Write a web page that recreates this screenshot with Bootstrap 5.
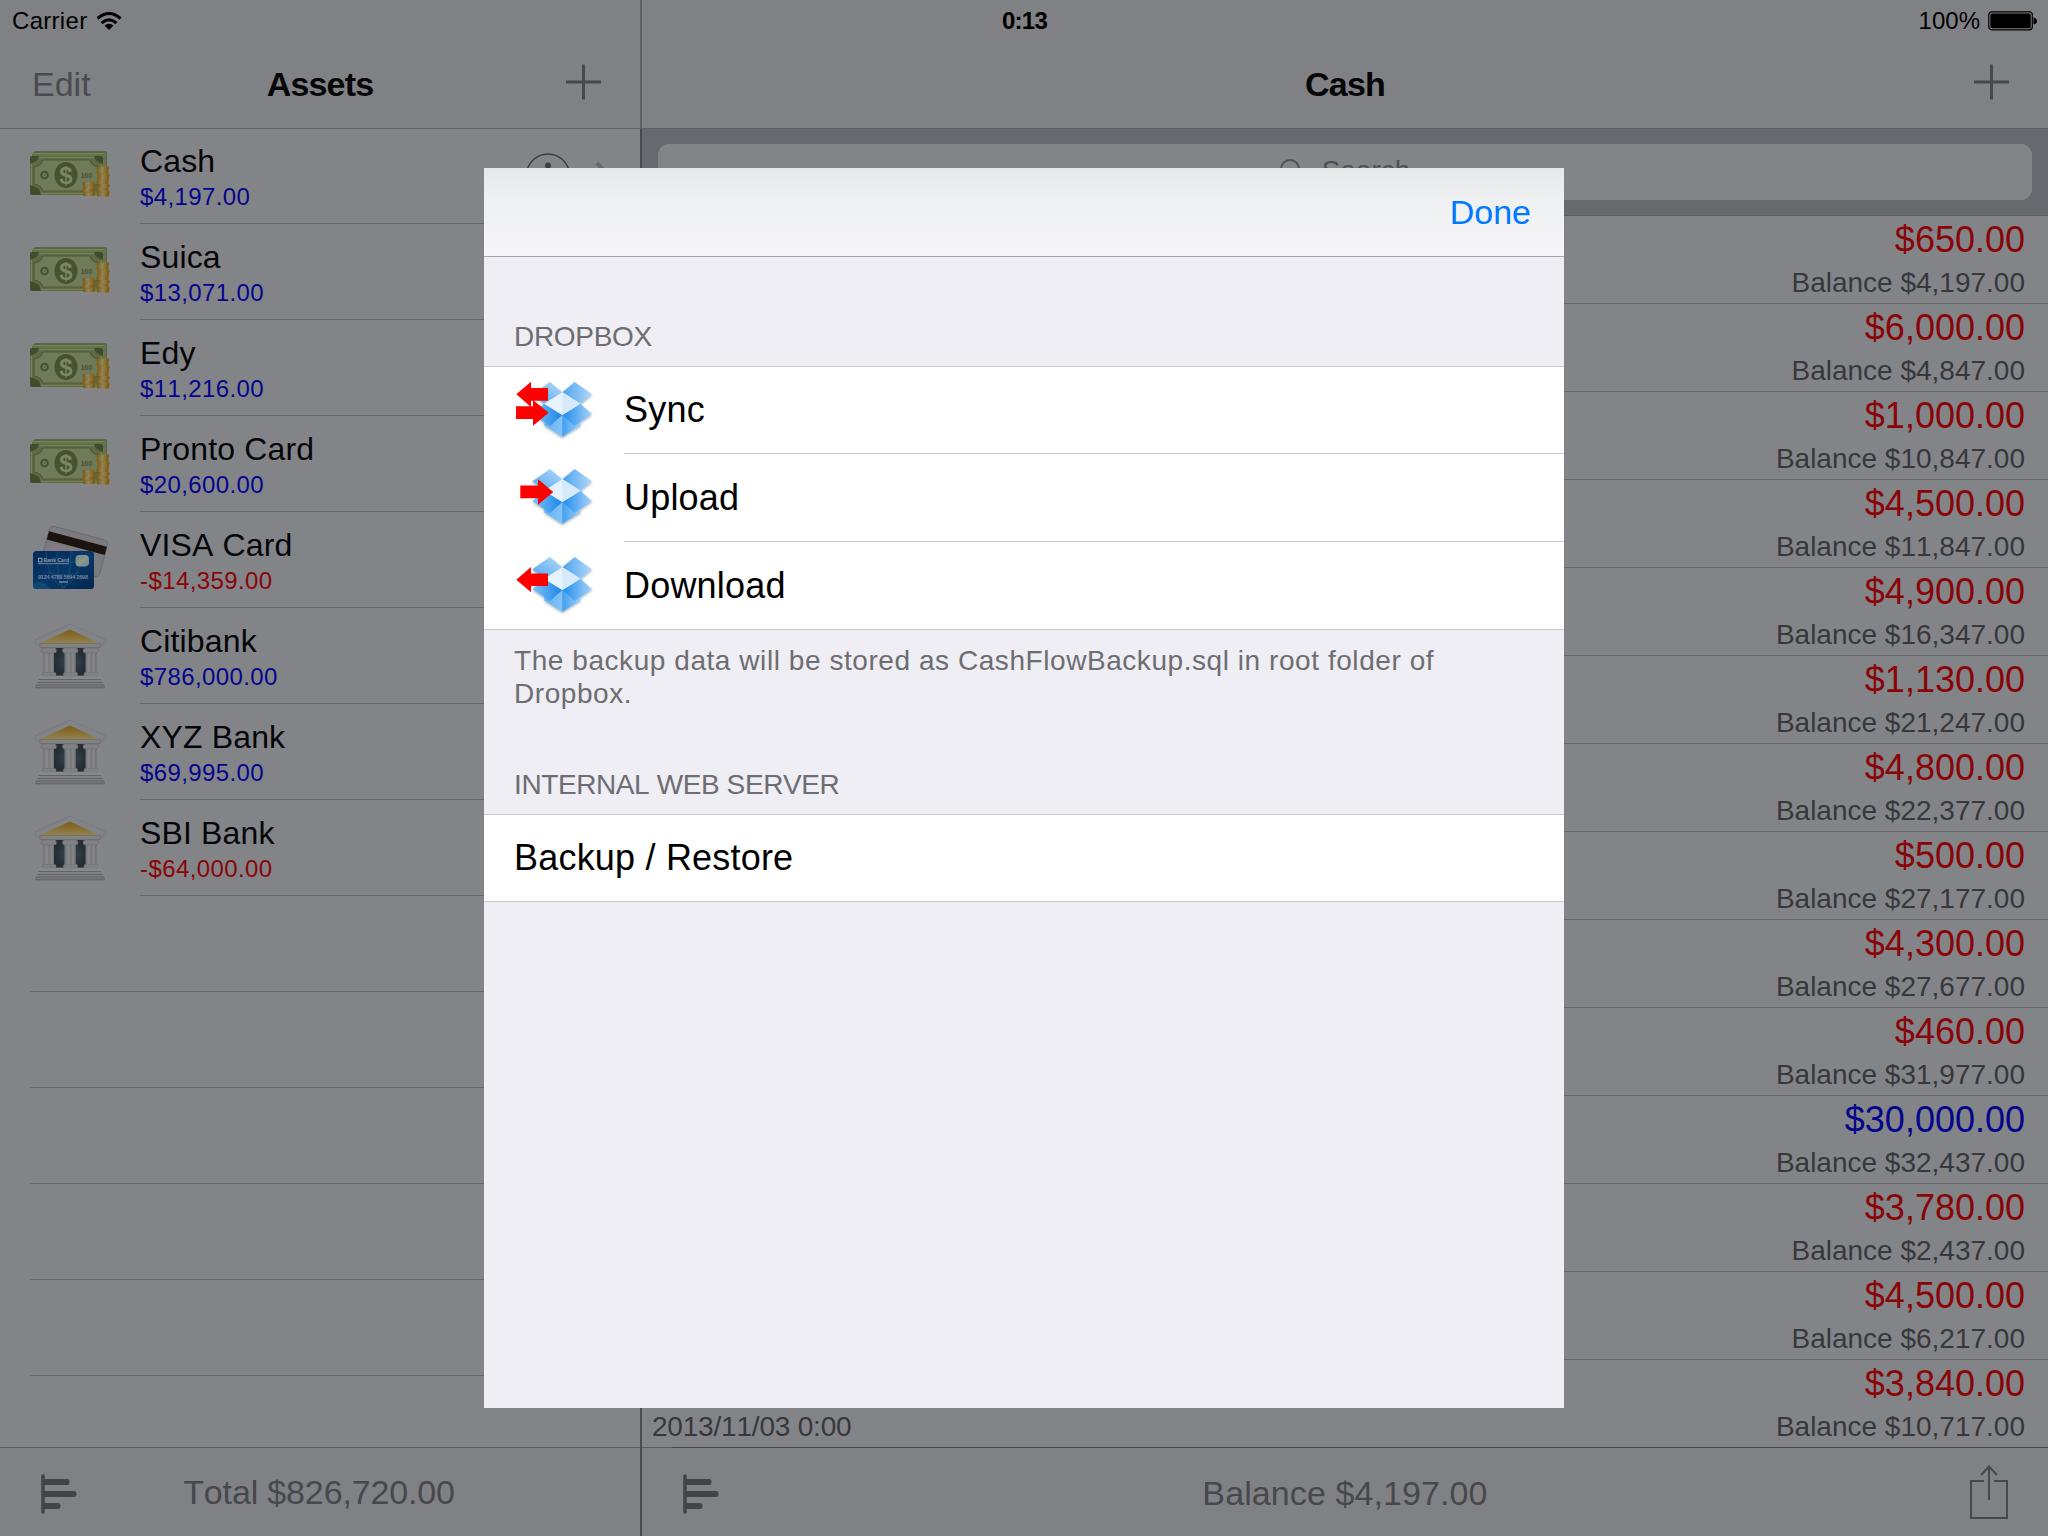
<!DOCTYPE html>
<html lang="en">
<head>
<meta charset="utf-8">
<title>CashFlow</title>
<link rel="stylesheet" href="https://cdn.jsdelivr.net/npm/bootstrap@5.3.0/dist/css/bootstrap.min.css">
<style>
body{font-family:"Liberation Sans",Arial,sans-serif;background:#838488;color:#050608;width:2048px;height:1536px;overflow:hidden;font-kerning:none}
svg{display:block;flex:none}
.statusbar{height:42px;padding:0 11px 0 12px;font-size:24px;line-height:42px;color:#000;z-index:2}
.carrier{letter-spacing:.3px}
.clock{font-weight:700;letter-spacing:-.7px}
.pane-left{width:640px}
.pane-right{position:relative;border-left:2px solid #4a4b4e}
.topbar{height:129px;padding-top:40px;background:#808184;border-bottom:1px solid #606165;font-size:34px}
.topbar .side{width:170px;color:#4a4b4f}
.topbar svg{margin-bottom:4px}
.pane-right .topbar{margin-left:-2px;border-left:2px solid #606165}
.ttl{font-weight:700;letter-spacing:-.8px}
.acct{height:96px;padding-left:28px}
.acct .pic{width:112px}
.acct .body{height:95.5px;height:96px;padding-top:13px;background:linear-gradient(#68696d,#68696d) 0 95px/100% 1px no-repeat}
.acct .nm{font-size:32px;line-height:38px;letter-spacing:.15px}
.acct .amt{font-size:24px;line-height:30px;margin-top:2px;letter-spacing:.4px}
.accounts-list{margin-top:-1px}
.acct .shift{padding-top:1px}
.pos{color:#05058c}.neg{color:#8a0508}
.blank{height:96px;margin-left:30px;border-bottom:1px solid #68696d}
.searchwrap{height:87px;background:#68696e;padding:15px 16px;border-bottom:1px solid #5e5f63}
.field{height:56px;border-radius:11px;background:#838488;color:#4f5054;font-size:28px;line-height:54px}
.txn{height:88px;border-bottom:1px solid #68696d;padding:4px 23px 0 10px}
.txn:last-child{border-bottom:0;height:87px}
.txn .amt{font-size:36px;line-height:40px}
.txn .bal{font-size:28px;line-height:32px;margin-top:7px;color:#37383b}
.stamp{letter-spacing:-.2px}
.botbar{height:89px;background:#808184;border-top:1px solid #5c5d61;color:#47484c;font-size:34px;letter-spacing:-.15px}
.botbar.r{background:linear-gradient(90deg,#5c5d61 30px,#47484b 30px) top/100% 1px no-repeat #808184;border-top:0;letter-spacing:.1px}
.botbar .side{width:100px}
.botbar .total{padding-right:2px}
.sheet{left:484px;top:168px;width:1080px;height:1240px;background:#efeef4;z-index:5;color:#000}
.sheet-nav{height:89px;background:linear-gradient(#e7e8e9,#eff0f1 35%,#f6f6f8);border-bottom:1px solid #a5a5aa;padding-right:33px;font-size:34px;color:#007aff}
.sec{font-size:28px;line-height:34px;color:#6d6d72;padding-left:30px}
.group{background:#fff;border-top:1px solid #c8c7cc;border-bottom:1px solid #c8c7cc;font-size:36px;letter-spacing:.2px}
.cell{padding-left:30px}
.cell .pic{width:110px;padding-top:11px}
.cell .body{height:88px;line-height:88px;border-bottom:1px solid #c8c7cc}
.cell:first-child .body{height:87px;line-height:86px}
.cell:last-child .body{border-bottom:0;height:87px}
.cell:only-child .body{height:86px}
</style>
<script src="https://cdn.jsdelivr.net/npm/bootstrap@5.3.0/dist/js/bootstrap.bundle.min.js"></script>
</head>
<body class="position-relative">
<svg width="0" height="0" class="position-absolute">
<defs>
<linearGradient id="coin"><stop offset="0" stop-color="#7a5a0c"/><stop offset=".45" stop-color="#94855a"/><stop offset="1" stop-color="#7c5600"/></linearGradient>
<linearGradient id="gold" x1="0" y1="0" x2="0" y2="1"><stop offset="0" stop-color="#7a5c14"/><stop offset="1" stop-color="#94824c"/></linearGradient>
<linearGradient id="stone" x1="0" y1="0" x2="0" y2="1"><stop offset="0" stop-color="#8a8b8d"/><stop offset="1" stop-color="#737477"/></linearGradient>
<linearGradient id="shaft"><stop offset="0" stop-color="#6f7073"/><stop offset=".3" stop-color="#898a8c"/><stop offset=".55" stop-color="#76777a"/><stop offset=".8" stop-color="#88898b"/><stop offset="1" stop-color="#6c6d70"/></linearGradient>
<radialGradient id="door"><stop offset="0" stop-color="#3c4852"/><stop offset="1" stop-color="#232d34"/></radialGradient>
<linearGradient id="blue" x1="0" y1="0" x2="1" y2="1"><stop offset="0" stop-color="#052a58"/><stop offset=".5" stop-color="#07386a"/><stop offset="1" stop-color="#03264f"/></linearGradient>
<linearGradient id="holo" x1="0" y1="0" x2="1" y2="1"><stop offset="0" stop-color="#6d8590"/><stop offset=".5" stop-color="#8b9a86"/><stop offset="1" stop-color="#6f84a0"/></linearGradient>
<linearGradient id="f1" x1="0" y1="1" x2="1" y2="0"><stop offset="0" stop-color="#4da3ee"/><stop offset="1" stop-color="#b5dbf9"/></linearGradient>
<linearGradient id="f2"><stop offset="0" stop-color="#4aa3f0"/><stop offset="1" stop-color="#b3d9f8"/></linearGradient>
<linearGradient id="f3"><stop offset="0" stop-color="#7fc0f7"/><stop offset="1" stop-color="#1a86e8"/></linearGradient>
<linearGradient id="f4"><stop offset="0" stop-color="#1f8bec"/><stop offset="1" stop-color="#a6d3f8"/></linearGradient>
<linearGradient id="f5"><stop offset="0" stop-color="#5fb0f3"/><stop offset="1" stop-color="#a9d6f9"/></linearGradient>
<linearGradient id="f6"><stop offset="0" stop-color="#3f9ff0"/><stop offset="1" stop-color="#9ccffa"/></linearGradient>
<filter id="soft" x="-20%" y="-20%" width="140%" height="150%"><feDropShadow dx="0" dy="1.5" stdDeviation="1.2" flood-color="#345" flood-opacity=".4"/></filter>
<g id="stack"><rect width="12" height="3.6" rx="1" fill="url(#coin)"/></g>
<symbol id="cash" viewBox="0 0 84 50">
<path d="M7 2H77Q79 2 79 4V34H4V5z" fill="#59663f"/><path d="M5 4.500H77V34M4 6H75V34" fill="none" stroke="#7d8963" stroke-width=".8"/>
<rect x="2" y="7" width="73" height="39" rx="2" fill="#5e6b43"/><rect x="3.500" y="8.500" width="70" height="36" rx="1" fill="none" stroke="#7c8863" stroke-width=".8"/>
<path d="M2 9q0-2 2-2H11Q10 13 2 15zM75 9q0-2-2-2H66Q67 13 75 15zM2 44q0 2 2 2H13Q12 38 2 36z" fill="#414c2a"/>
<path d="M15 11H62Q64 17 71 18V35Q64 36 62 42H15Q13 36 6 35V18Q13 17 15 11z" fill="#707b5b" stroke="#4e5a36" stroke-width="1.200"/>
<ellipse cx="38" cy="26" rx="11.500" ry="13" fill="#465230"/>
<text x="38" y="34.500" font-size="24" font-weight="700" text-anchor="middle" fill="#7c8766">$</text>
<circle cx="16.500" cy="26" r="3.300" fill="none" stroke="#465230" stroke-width="2"/><circle cx="16.500" cy="26" r=".8" fill="#465230"/>
<text x="58.500" y="28.500" font-size="7" font-weight="700" text-anchor="middle" fill="#465230">100</text>
<g><use href="#stack" x="54.500" y="33"/><use href="#stack" x="55" y="36.500"/><use href="#stack" x="54" y="40"/><use href="#stack" x="55" y="43.500"/>
<use href="#stack" x="69" y="17.500"/><use href="#stack" x="68.500" y="21"/><use href="#stack" x="69.500" y="24.500"/><use href="#stack" x="69" y="28"/><use href="#stack" x="68.500" y="31.500"/><use href="#stack" x="69.500" y="35"/><use href="#stack" x="68.500" y="38.500"/><use href="#stack" x="69.500" y="42"/><use href="#stack" x="69" y="44"/></g>
</symbol>
<symbol id="plastic" viewBox="0 0 84 70">
<g transform="translate(20.500 3.500) rotate(15)"><rect width="60" height="38" rx="4" fill="#7a7b7e" stroke="#66676a" stroke-width=".8"/><rect x="0" y="6" width="60" height="8.500" fill="#1c130f"/><rect x="6" y="17" width="44" height="8" fill="#857883"/><rect x="30" y="17" width="22" height="10" fill="#737f90"/></g>
<rect x="3" y="29" width="61" height="38" rx="3.500" fill="url(#blue)"/>
<g fill="none" stroke="#155073" stroke-width=".8"><path d="M16 30Q18 60 34 66M52 30Q50 58 32 66M27 29Q27 56 33 66M41 29Q41 56 34 66M14 38Q34 44 54 38M18 50Q34 56 50 50"/></g>
<path d="M3 62q10-6 18 5H7q-4 0-4-3z" fill="#14547c" opacity=".6"/>
<rect x="8.500" y="36.300" width="3.400" height="3.600" fill="none" stroke="#8d98a6" stroke-width="1"/>
<text x="13.500" y="40" font-size="6" font-weight="700" fill="#8d98a6" textLength="25.500" lengthAdjust="spacingAndGlyphs">Bank Card</text><path d="M8 41.700H39" stroke="#8d98a6" stroke-width=".8"/>
<rect x="45.500" y="33" width="13.500" height="11.500" rx="4" fill="url(#holo)"/>
<text x="8" y="56.500" font-size="5.500" font-weight="700" fill="#76859a" textLength="50">9124 4789 5694 2698</text><path d="M29 60h9" stroke="#76859a" stroke-width="1.500"/>
</symbol>
<symbol id="bank" viewBox="0 0 84 70">
<path d="M40 4L76 20V23L72 25H8L5 23V20z" fill="#828387" stroke="#737477" stroke-width=".7"/>
<path d="M40 9.500L69 23H11z" fill="url(#gold)"/>
<rect x="10" y="23.500" width="60.500" height="4" fill="#828386" stroke="#66676a" stroke-width=".6"/>
<rect x="13" y="28" width="54" height="28" fill="#77787b"/>
<path d="M24 28H34.500V55.500H24zM45.500 28H56V55.500H45.500z" fill="url(#door)"/>
<g id="pillar"><rect x="13.500" y="31" width="10.500" height="24" fill="url(#shaft)"/><rect x="11" y="28" width="15.500" height="5" rx="2.500" fill="#808184" stroke="#6a6b6e" stroke-width=".6"/><rect x="12" y="52.500" width="14" height="3.500" rx="1" fill="#808184" stroke="#6c6d70" stroke-width=".5"/></g>
<use href="#pillar" x="21.500"/><use href="#pillar" x="42"/>
<path d="M10 56.500H70.500L75 65V68H5V65z" fill="url(#stone)"/><path d="M9 59.500H71M8 62.500H73M6 65.200H74M5 67.800H75" stroke="#5f6063" stroke-width=".9"/>
</symbol>
<symbol id="bars" viewBox="0 0 36 40"><path d="M2 2V38" stroke="#434448" stroke-width="3.500" stroke-linecap="round"/><path d="M3 5H26.500q2 0 2 3t-2 3H3zM3 17H33q2.500 0 2.500 3T33 23H3zM3 29H17q2.500 0 2.500 3T17 35H3z" fill="#434448"/></symbol>
<symbol id="plus" viewBox="0 0 36 36"><path d="M18.500 0.500V35.500M1 18H36" stroke="#47484c" stroke-width="3"/></symbol>
<symbol id="box" viewBox="0 0 84 64"><g filter="url(#soft)">
<path d="M30.300 42L48.300 36L66.300 42V47.300L48.300 58.700L30.300 47.300z" fill="url(#f5)"/><path d="M48.300 37L66.300 43V47.300L48.300 58.700z" fill="url(#f6)"/>
<path d="M18.300 16.300L36 4L48.300 14.300L30.300 25.700z" fill="url(#f1)"/><path d="M48.300 14.300L60.700 4L78 16.300L66.300 25.700z" fill="url(#f2)"/>
<path d="M30.300 25.700L48.300 37L36 48L18.300 36z" fill="url(#f3)"/><path d="M66.300 25.700L78 36L60.700 48L48.300 37z" fill="url(#f4)"/>
<path d="M48.300 14.300L66.300 25.700L48.300 37L30.300 25.700z" fill="#e6f3fd"/><path d="M48.300 14.300L66.300 25.700L48.300 37z" fill="#d6eafb"/></g></symbol>
</defs></svg>

<div class="statusbar position-absolute top-0 start-0 w-100 d-flex justify-content-between">
<div class="d-flex align-items-center col"><span class="carrier">Carrier</span>
<svg class="ms-2" width="28" height="20" viewBox="0 0 28 20"><g fill="none" stroke="#000" stroke-width="3"><path d="M2.500 7.500Q14-2.500 25.500 7.500M6.500 12Q14 5.500 21.500 12"/></g><path d="M14 19L9.500 14.500Q14 11 18.500 14.500z"/></svg></div>
<div class="clock">0:13</div>
<div class="col d-flex align-items-center justify-content-end"><span>100%</span>
<svg class="ms-2" width="49" height="20" viewBox="0 0 49 20"><rect x=".8" y=".8" width="43.500" height="18" rx="3" fill="none" stroke="#000" stroke-width="1.200"/><rect x="2.400" y="2.400" width="40.300" height="14.800" rx="1.500"/><path d="M45.500 6.500q3.500 1 3.500 3.500T45.500 13.500z"/></svg></div>
</div>

<div class="d-flex h-100">
<div class="pane-left d-flex flex-column">
<div class="topbar d-flex align-items-center"><div class="side" style="padding-left:32px">Edit</div><div class="ttl flex-fill text-center">Assets</div><div class="side d-flex justify-content-end" style="padding-right:39px"><svg width="36" height="36"><use href="#plus"/></svg></div></div>
<div class="flex-fill overflow-hidden"><div id="accounts" class="accounts-list"></div></div>
<div class="botbar d-flex align-items-center"><div class="side" style="padding-left:41px"><svg width="36" height="40" class="mt-1"><use href="#bars"/></svg></div><div class="total flex-fill text-center">Total $826,720.00</div><div class="side"></div></div>
</div>
<div class="pane-right flex-fill d-flex flex-column">
<div class="topbar d-flex align-items-center"><div class="side"></div><div class="ttl flex-fill text-center">Cash</div><div class="side d-flex justify-content-end" style="padding-right:39px"><svg width="36" height="36"><use href="#plus"/></svg></div></div>
<div class="searchwrap"><div class="field d-flex justify-content-center"><svg class="me-3" style="margin-top:15px" width="26" height="28" viewBox="0 0 26 28"><circle cx="10" cy="10" r="9" fill="none" stroke="#4f5054" stroke-width="2"/><path d="M16 17L24 26" stroke="#4f5054" stroke-width="2"/></svg><span>Search</span></div></div>
<div id="txns" class="flex-fill overflow-hidden"></div>
<div class="botbar r d-flex align-items-center"><div class="side" style="padding-left:41px"><svg width="36" height="40" class="mt-1"><use href="#bars"/></svg></div><div class="flex-fill text-center pt-1">Balance $4,197.00</div><div class="side d-flex justify-content-end" style="padding-right:39px"><svg width="40" height="56" viewBox="0 0 40 56"><path d="M15 17H2V54H38V17H25M20 2V36M12 11L20 2.500L28 11" fill="none" stroke="#47484c" stroke-width="2"/></svg></div></div>
</div>
</div>

<div class="sheet position-absolute">
<div class="sheet-nav d-flex align-items-center justify-content-end">Done</div>
<div class="sec" style="padding-top:63px;padding-bottom:12px;letter-spacing:-.3px">DROPBOX</div>
<div class="group">
<div class="cell d-flex"><div class="pic"><svg width="84" height="64"><use href="#box"/><path d="M2.300 16.300L17 3.700V10H34V22.700H17V29zM2 28.300H19V22L34.700 34.700L19 47.700V41H2z" fill="#f00"/></svg></div><div class="body flex-fill">Sync</div></div>
<div class="cell d-flex"><div class="pic"><svg width="84" height="64"><use href="#box"/><path d="M6.300 20.600H24V14.300L39.300 27L24 39.700V33.300H6.300z" fill="#f00"/></svg></div><div class="body flex-fill">Upload</div></div>
<div class="cell d-flex"><div class="pic"><svg width="84" height="64"><use href="#box"/><path d="M2.300 26.700L17 14V20.400H34V33H17V39.300z" fill="#f00"/></svg></div><div class="body flex-fill">Download</div></div>
</div>
<div class="sec" style="padding-top:14px;line-height:33px;letter-spacing:.56px">The backup data will be stored as CashFlowBackup.sql in root folder of<br>Dropbox.</div>
<div class="sec" style="padding-top:58px;padding-bottom:12px;letter-spacing:-.4px">INTERNAL WEB SERVER</div>
<div class="group"><div class="cell"><div class="body">Backup / Restore</div></div></div>
</div>

<script>
const accounts=[["Cash","$4,197.00","cash"],["Suica","$13,071.00","cash"],["Edy","$11,216.00","cash"],["Pronto Card","$20,600.00","cash"],["VISA Card","-$14,359.00","plastic"],["Citibank","$786,000.00","bank"],["XYZ Bank","$69,995.00","bank"],["SBI Bank","-$64,000.00","bank"]];
const top_={cash:21,plastic:10,bank:12};
const info='<svg width="92" height="60" viewBox="0 0 92 60"><circle cx="24" cy="32.500" r="21.500" fill="none" stroke="#3e3f43" stroke-width="1.500"/><circle cx="24" cy="22.500" r="3" fill="#3e3f43"/><path d="M24 28V44" stroke="#3e3f43" stroke-width="3"/><path d="M73 20L84 32L73 44" fill="none" stroke="#66676c" stroke-width="4"/></svg>';
document.getElementById("accounts").innerHTML=accounts.map(([n,a,i],k)=>`<div class="acct d-flex"><div class="pic"><svg width="84" height="${i=="cash"?50:70}" style="margin-top:${top_[i]}px;margin-left:${i=="cash"?0:2}px"><use href="#${i}"/></svg></div><div class="body flex-fill d-flex justify-content-between"><div class="shift"><div class="nm">${n}</div><div class="amt ${a[0]=="-"?"neg":"pos"}">${a}</div></div>${k?"":'<div style="margin-right:24px;margin-top:2px">'+info+'</div>'}</div></div>`).join("")+'<div class="blank"></div>'.repeat(5);
const txns=[["650","4,197"],["6,000","4,847"],["1,000","10,847"],["4,500","11,847"],["4,900","16,347"],["1,130","21,247"],["4,800","22,377"],["500","27,177"],["4,300","27,677"],["460","31,977"],["30,000","32,437"],["3,780","2,437"],["4,500","6,217"],["3,840","10,717"]];
document.getElementById("txns").innerHTML=txns.map(([a,b],k)=>`<div class="txn"><div class="amt text-end ${k==10?"pos":"neg"}">$${a}.00</div><div class="bal d-flex justify-content-between"><span class="stamp">${k==13?"2013/11/03 0:00":""}</span><span>Balance $${b}.00</span></div></div>`).join("");
</script>
</body>
</html>
